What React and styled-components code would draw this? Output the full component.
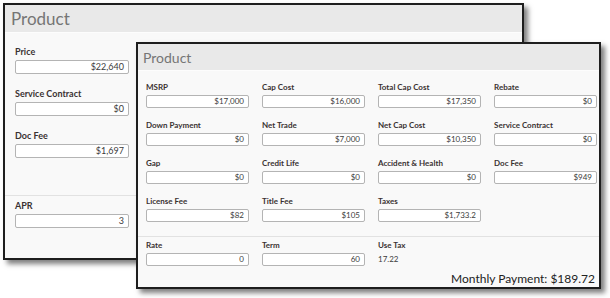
import React from 'react'
import styled, { createGlobalStyle } from 'styled-components'

const GlobalStyle = createGlobalStyle`
  html, body {
    margin: 0;
    padding: 0;
    background: #fff;
  }
  body {
    font-family: Lato, "Open Sans", "Liberation Sans", sans-serif;
  }
`

const backFields = [
  { label: 'Price', value: '$22,640' },
  { label: 'Service Contract', value: '$0' },
  { label: 'Doc Fee', value: '$1,697' },
]

const frontFields = [
  { label: 'MSRP', value: '$17,000' },
  { label: 'Cap Cost', value: '$16,000' },
  { label: 'Total Cap Cost', value: '$17,350' },
  { label: 'Rebate', value: '$0' },
  { label: 'Down Payment', value: '$0' },
  { label: 'Net Trade', value: '$7,000' },
  { label: 'Net Cap Cost', value: '$10,350' },
  { label: 'Service Contract', value: '$0' },
  { label: 'Gap', value: '$0' },
  { label: 'Credit Life', value: '$0' },
  { label: 'Accident & Health', value: '$0' },
  { label: 'Doc Fee', value: '$949' },
  { label: 'License Fee', value: '$82' },
  { label: 'Title Fee', value: '$105' },
  { label: 'Taxes', value: '$1,733.2' },
]

function Field({ label, value, big }) {
  return (
    <FieldBox>
      <Label $big={big}>{label}</Label>
      <Input $big={big}>{value}</Input>
    </FieldBox>
  )
}

export default function App() {
  return (
    <>
      <GlobalStyle />
      <Desktop>
        {/* ventana de atras */}
        <Window $left={3} $top={3} $width={521} $height={257}>
          <Header $big>Product</Header>
          <BackBody>
            <BackColumn>
              {backFields.map((f) => (
                <Field key={f.label} {...f} big />
              ))}
            </BackColumn>
            <Divider $big />
            <BackColumn>
              <Field label="APR" value="3" big />
            </BackColumn>
          </BackBody>
        </Window>

        {/* ventana de adelante */}
        <Window $left={136} $top={42} $width={465} $height={247}>
          <Header>Product</Header>
          <FrontBody>
            <Grid>
              {frontFields.map((f) => (
                <Field key={f.label} {...f} />
              ))}
            </Grid>
            <Divider />
            <Grid>
              <Field label="Rate" value="0" />
              <Field label="Term" value="60" />
              <FieldBox>
                <Label>Use Tax</Label>
                <PlainValue>17.22</PlainValue>
              </FieldBox>
            </Grid>
          </FrontBody>
          <Footer>Monthly Payment: $189.72</Footer>
        </Window>
      </Desktop>
    </>
  )
}

const Desktop = styled.div`
  position: relative;
  width: 610px;
  height: 298px;
  overflow: hidden;
  background: #fff;
`

const Window = styled.div`
  position: absolute;
  left: ${(p) => p.$left}px;
  top: ${(p) => p.$top}px;
  width: ${(p) => p.$width}px;
  height: ${(p) => p.$height}px;
  box-sizing: border-box;
  border: 2px solid #1e1e1e;
  background: #f9f9f9;
  box-shadow: 4px 4px 5px rgba(0, 0, 0, 0.5);
  display: flex;
  flex-direction: column;
`

const Header = styled.div`
  height: ${(p) => (p.$big ? 27 : 26)}px;
  flex: none;
  display: flex;
  align-items: center;
  padding-left: ${(p) => (p.$big ? 6 : 5)}px;
  background: #e9e9e9;
  border-bottom: 1px solid #fdfdfd;
  color: #757575;
  font-size: ${(p) => (p.$big ? 17 : 14)}px;
`

const BackBody = styled.div`
  padding: 13px 10px 0;
`

const BackColumn = styled.div`
  display: flex;
  flex-direction: column;
  gap: 14px;
  width: 114px;
`

const FrontBody = styled.div`
  padding: 11px 8px 0;
`

const Grid = styled.div`
  display: grid;
  grid-template-columns: repeat(4, 103px);
  column-gap: 13px;
  row-gap: 12px;
`

const FieldBox = styled.div`
  display: flex;
  flex-direction: column;
`

const Label = styled.div`
  font-size: ${(p) => (p.$big ? 9 : 8)}px;
  line-height: ${(p) => (p.$big ? 11 : 10)}px;
  font-weight: 700;
  color: #3a3232;
  margin-bottom: 3px;
  white-space: nowrap;
`

const Input = styled.div`
  box-sizing: border-box;
  height: ${(p) => (p.$big ? 14 : 13)}px;
  border: 1px solid #b4b4b4;
  border-radius: 2px;
  background: #fff;
  font-size: ${(p) => (p.$big ? 9 : 8)}px;
  line-height: ${(p) => (p.$big ? 12 : 11)}px;
  color: #3c3c3c;
  text-align: right;
  padding-right: 4px;
`

const PlainValue = styled.div`
  font-size: 8px;
  line-height: 13px;
  color: #3c3c3c;
`

const Divider = styled.div`
  border-top: 1px solid #e2e2e2;
  margin: ${(p) => (p.$big ? '37px -10px 4px' : '14px -8px 3px')};
`

const Footer = styled.div`
  margin-top: auto;
  padding: 0 4px 1px 0;
  text-align: right;
  font-size: 12px;
  line-height: 14px;
  color: #222;
`
